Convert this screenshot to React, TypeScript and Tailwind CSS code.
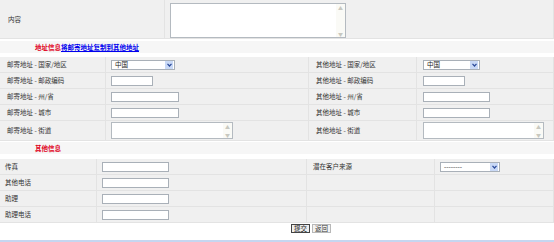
import React from "react";

const font = { fontFamily: '"Noto Sans CJK SC", "Noto Sans", sans-serif' };

function TextBox({ w }: { w: string }) {
  return <div className={`h-[10px] ${w} border border-[#a9b0b8] bg-white`} />;
}

function Chevron() {
  return (
    <svg width="5" height="4" viewBox="0 0 5 4">
      <path d="M0.5 0.8 L2.5 3 L4.5 0.8" fill="none" stroke="#2a4a9a" strokeWidth="1.2" />
    </svg>
  );
}

function Select({ w, value }: { w: string; value: string }) {
  return (
    <div className={`flex h-[10px] ${w} items-center border border-[#a9b0b8] bg-white`}>
      <span className="pl-[3px] text-[6.5px] leading-none text-[#222]">{value}</span>
      <span className="ml-auto mr-px flex h-[8px] w-[8px] items-center justify-center bg-[#c9d9f6]">
        <Chevron />
      </span>
    </div>
  );
}

function Area({ w, h }: { w: string; h: string }) {
  return (
    <div className={`flex ${h} ${w} border border-[#b4bac0] bg-white`}>
      <div className="flex-1" />
      <div className="flex w-[9px] flex-col items-center justify-between bg-[#fafaf6] py-px text-[5px] leading-none text-[#c8c8c0]">
        <span>▲</span>
        <span>▼</span>
      </div>
    </div>
  );
}

const cell = "flex items-center border-b border-r border-[#e3e3e3] bg-[#f0f0f0]";
const label = "text-[6.5px] leading-none text-[#333]";

export default function App() {
  const addrRows = [
    { l: "邮寄地址 - 国家/地区", r: "其他地址 - 国家/地区", kind: "select" },
    { l: "邮寄地址 - 邮政编码", r: "其他地址 - 邮政编码", kind: "zip" },
    { l: "邮寄地址 - 州/省", r: "其他地址 - 州/省", kind: "text" },
    { l: "邮寄地址 - 城市", r: "其他地址 - 城市", kind: "text" },
    { l: "邮寄地址 - 街道", r: "其他地址 - 街道", kind: "area" },
  ];

  const field = (kind: string, right: boolean) => {
    if (kind === "select") return <Select w={right ? "w-[57px]" : "w-[64px]"} value="中国" />;
    if (kind === "zip") return <TextBox w="w-[42px]" />;
    if (kind === "text") return <TextBox w={right ? "w-[67px]" : "w-[68px]"} />;
    return <Area w={right ? "w-[121px]" : "w-[122px]"} h="h-[17px]" />;
  };

  const otherRows = ["传真", "其他电话", "助理", "助理电话"];

  return (
    <div className="h-[242px] w-[554px] overflow-hidden bg-white" style={font}>
      {/* 内容 */}
      <div className="flex h-[39px]">
        <div className={`${cell} w-[165px] pl-[8px]`}>
          <span className={label}>内容</span>
        </div>
        <div className={`${cell} flex-1 items-start pl-[5px] pt-[3px]`}>
          <Area w="w-[176px]" h="h-[35px]" />
        </div>
      </div>

      {/* 地址信息 */}
      <div className="mt-[2px] flex h-[12px] items-center bg-[#f6f6f6] pl-[35px] text-[6.5px] font-bold leading-none">
        <span className="text-[#e0001b]">地址信息</span>
        <a className="text-[#0000ee] underline">将邮寄地址复制到其他地址</a>
      </div>

      <div className="mt-[4px] grid grid-cols-[106px_203px_108px_1fr]">
        {addrRows.map((r) => (
          <React.Fragment key={r.l}>
            <div className={`${cell} ${r.kind === "area" ? "h-[20px]" : "h-[16px]"} pl-[7px]`}>
              <span className={label}>{r.l}</span>
            </div>
            <div className={`${cell} pl-[5px]`}>{field(r.kind, false)}</div>
            <div className={`${cell} pl-[7px]`}>
              <span className={label}>{r.r}</span>
            </div>
            <div className={`${cell} pl-[6px]`}>{field(r.kind, true)}</div>
          </React.Fragment>
        ))}
      </div>

      {/* 其他信息 */}
      <div className="mt-px flex h-[12px] items-center bg-[#f6f6f6] pl-[35px] text-[6.5px] font-bold leading-none text-[#e0001b]">
        其他信息
      </div>

      <div className="mt-[5px] grid grid-cols-[97px_210px_128px_1fr]">
        {otherRows.map((l, i) => (
          <React.Fragment key={l}>
            <div className={`${cell} h-[16px] pl-[5px]`}>
              <span className={label}>{l}</span>
            </div>
            <div className={`${cell} pl-[5px]`}>
              <TextBox w="w-[67px]" />
            </div>
            <div className={`${cell} pl-[6px]`}>
              {i === 0 && <span className={label}>潜在客户来源</span>}
            </div>
            <div className={`${cell} pl-[5px]`}>
              {i === 0 && <Select w="w-[60px]" value="--------" />}
            </div>
          </React.Fragment>
        ))}
      </div>

      <div className="flex h-[17px] items-start gap-[2px] pl-[291px] pt-px">
        <button className="h-[9px] border border-[#444] bg-[#eeeeee] px-[2px] text-[6.5px] leading-none text-[#222]">
          提交
        </button>
        <button className="h-[9px] border border-[#b8b8b8] bg-[#f2f2f2] px-[2px] text-[6.5px] leading-none text-[#333]">
          返回
        </button>
      </div>
      <div className="h-[2px] bg-[#c6d6f0]" />
    </div>
  );
}
